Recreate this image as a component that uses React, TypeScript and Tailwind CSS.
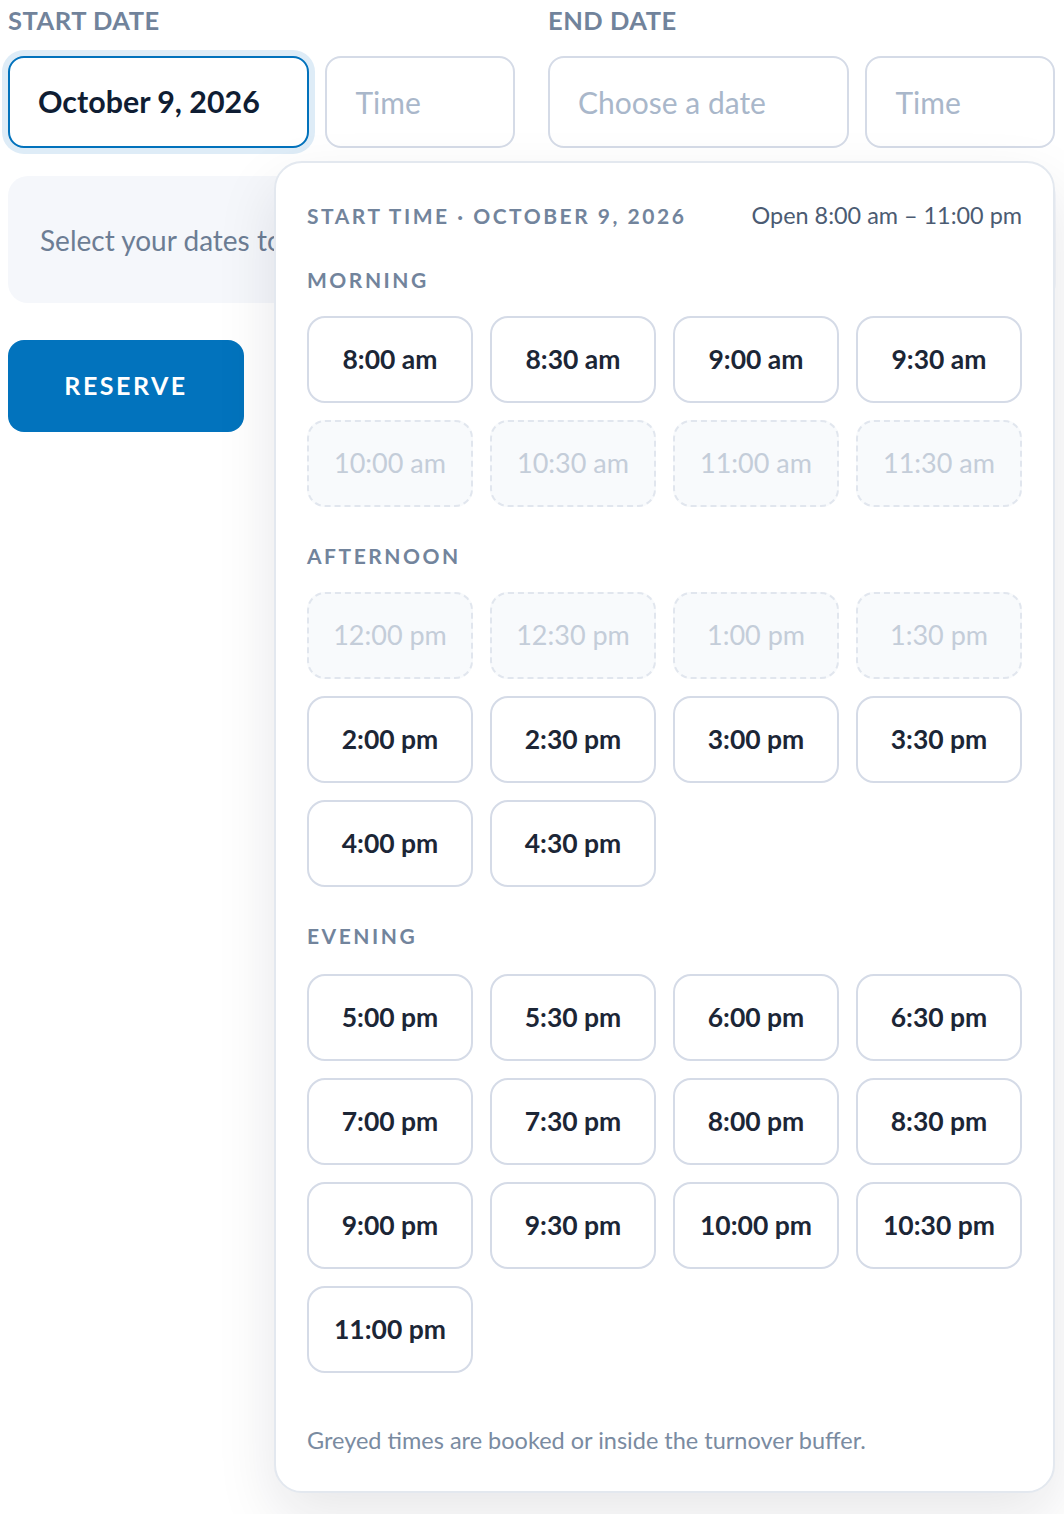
import React from "react";

type Slot = { t: string; off?: boolean };

const morning: Slot[] = [
  { t: "8:00 am" },
  { t: "8:30 am" },
  { t: "9:00 am" },
  { t: "9:30 am" },
  { t: "10:00 am", off: true },
  { t: "10:30 am", off: true },
  { t: "11:00 am", off: true },
  { t: "11:30 am", off: true },
];
const afternoon: Slot[] = [
  { t: "12:00 pm", off: true },
  { t: "12:30 pm", off: true },
  { t: "1:00 pm", off: true },
  { t: "1:30 pm", off: true },
  { t: "2:00 pm" },
  { t: "2:30 pm" },
  { t: "3:00 pm" },
  { t: "3:30 pm" },
  { t: "4:00 pm" },
  { t: "4:30 pm" },
];
const evening: Slot[] = [
  { t: "5:00 pm" },
  { t: "5:30 pm" },
  { t: "6:00 pm" },
  { t: "6:30 pm" },
  { t: "7:00 pm" },
  { t: "7:30 pm" },
  { t: "8:00 pm" },
  { t: "8:30 pm" },
  { t: "9:00 pm" },
  { t: "9:30 pm" },
  { t: "10:00 pm" },
  { t: "10:30 pm" },
  { t: "11:00 pm" },
];

function Section({ title, slots, wide }: { title: string; slots: Slot[]; wide?: boolean }) {
  return (
    <div className="mt-[35px]">
      <div className="text-[21px] leading-[28px] font-bold tracking-[0.12em] text-[#72849c] uppercase">{title}</div>
      <div className={(wide ? "mt-[24px]" : "mt-[22px]") + " grid grid-cols-4 gap-[17px]"}>
        {slots.map((s) =>
          s.off ? (
            <div
              key={s.t}
              className="h-[87px] rounded-[18px] border-2 border-dashed border-[#e1e6ee] bg-[#f8fafc] flex items-center justify-center text-[27px] text-[#c4cdd9]"
            >
              {s.t}
            </div>
          ) : (
            <div
              key={s.t}
              className="h-[87px] rounded-[18px] border-2 border-[#d5dbe7] bg-white flex items-center justify-center text-[26.5px] font-bold text-[#1c2636]"
            >
              {s.t}
            </div>
          )
        )}
      </div>
    </div>
  );
}

export default function App() {
  return (
    <div className="relative w-[1064px] h-[1514px] bg-white px-[8px] pt-[2px] font-['Lato',sans-serif] overflow-hidden">
      <div className="flex gap-[33px]">
        <div className="w-[507px]">
          <div className="text-[25.5px] leading-[36px] font-bold tracking-[0.02em] text-[#71839b]">START DATE</div>
          <div className="mt-[18px] flex gap-[16px]">
            <div className="w-[302px] h-[92px] rounded-[16px] border-2 border-[#0272bc] ring-[6px] ring-[#deecf7] bg-white flex items-center pl-[28px] text-[30.4px] font-bold text-[#0f1d33]">
              October 9, 2026
            </div>
            <div className="w-[190px] h-[92px] rounded-[16px] border-2 border-[#d5dbe7] bg-white flex items-center pl-[28px] text-[30px] text-[#a9b7ca]">
              Time
            </div>
          </div>
        </div>
        <div className="w-[507px]">
          <div className="text-[25.5px] leading-[36px] font-bold tracking-[0.02em] text-[#71839b]">END DATE</div>
          <div className="mt-[18px] flex gap-[16px]">
            <div className="w-[302px] h-[92px] rounded-[16px] border-2 border-[#d5dbe7] bg-white flex items-center pl-[28px] text-[30px] text-[#a9b7ca]">
              Choose a date
            </div>
            <div className="w-[190px] h-[92px] rounded-[16px] border-2 border-[#d5dbe7] bg-white flex items-center pl-[28px] text-[30px] text-[#a9b7ca]">
              Time
            </div>
          </div>
        </div>
      </div>

      <div className="mt-[28px] h-[127px] rounded-[20px] bg-[#f5f7fb] flex items-center pl-[32px]">
        <div className="w-[234px] overflow-hidden whitespace-nowrap text-[28px] leading-[36px] text-[#6c7d94]">
          Select your dates to see the total price.
        </div>
      </div>

      <div className="mt-[37px] w-[236px] h-[92px] rounded-[16px] bg-[#0273bd] flex items-center justify-center text-[25px] font-bold tracking-[0.1em] text-white">
        RESERVE
      </div>

      <div className="absolute left-[274px] top-[161px] w-[781px] rounded-[28px] border-2 border-[#e3e8ef] bg-white shadow-[0_24px_60px_rgba(15,23,42,0.10)] px-[31px] pt-[38px] pb-[37px]">
        <div className="flex items-center justify-between h-[30px]">
          <div className="text-[21px] font-bold tracking-[0.12em] text-[#72849c]">START TIME · OCTOBER 9, 2026</div>
          <div className="text-[23.4px] text-[#4b5b72]">Open 8:00 am – 11:00 pm</div>
        </div>
        <Section title="Morning" slots={morning} />
        <Section title="Afternoon" slots={afternoon} />
        <Section title="Evening" slots={evening} wide />
        <div className="mt-[53px] text-[23.5px] leading-[28px] text-[#7a8ba1]">
          Greyed times are booked or inside the turnover buffer.
        </div>
      </div>
    </div>
  );
}
